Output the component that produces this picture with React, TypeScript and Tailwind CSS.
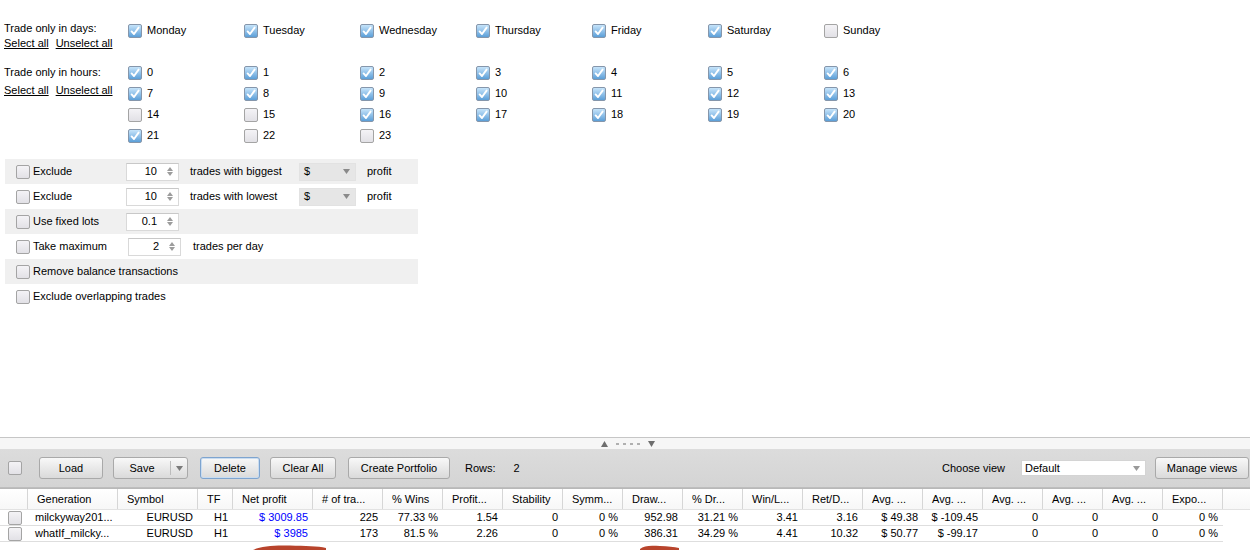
import React from "react";

function Cb({ checked }: { checked?: boolean }) {
  return checked ? (
    <span className="inline-flex h-[14px] w-[14px] shrink-0 items-center justify-center rounded-[2px] border border-[#8596ab] bg-linear-to-b from-[#c6e4fa] to-[#5b9fd8]">
      <svg viewBox="0 0 12 12" className="h-[12px] w-[12px]">
        <path d="M2.6 6.4 L5 9 L9.6 2.6" fill="none" stroke="white" strokeWidth="1.9" strokeLinecap="round" strokeLinejoin="round" />
      </svg>
    </span>
  ) : (
    <span className="inline-block h-[14px] w-[14px] shrink-0 rounded-[2px] border border-[#a4a4a4] bg-linear-to-b from-[#f4f3f6] to-[#e2e1e6]" />
  );
}

const days = [
  ["Monday", true],
  ["Tuesday", true],
  ["Wednesday", true],
  ["Thursday", true],
  ["Friday", true],
  ["Saturday", true],
  ["Sunday", false],
] as const;

const offHours = new Set([14, 15, 22, 23]);

function Spinner({ value, extra = "" }: { value: string; extra?: string }) {
  return (
    <div className={"flex h-[18px] w-[53px] shrink-0 items-center border border-[#d9d9d9] border-t-[#c8c8c8] bg-white " + extra}>
      <span className="flex-1 pr-[10px] text-right">{value}</span>
      <span className="mr-[5px] flex flex-col items-center gap-[1px]">
        <svg width="6" height="4" viewBox="0 0 6 4"><path d="M0 4 L3 0 L6 4 Z" fill="#9c9c9c" /></svg>
        <svg width="6" height="4" viewBox="0 0 6 4"><path d="M0 0 L3 4 L6 0 Z" fill="#9c9c9c" /></svg>
      </span>
    </div>
  );
}

function Dropdown() {
  return (
    <div className="flex h-[18px] w-[57px] shrink-0 items-center justify-between border border-[#e2e2e2] bg-[#e6e6e6] pl-[4px] pr-[5px]">
      <span>$</span>
      <svg width="7" height="5" viewBox="0 0 7 5"><path d="M0 0 L7 0 L3.5 5 Z" fill="#8a8a8a" /></svg>
    </div>
  );
}

function OptRow({ gray, children }: { gray?: boolean; children: React.ReactNode }) {
  return (
    <div className={"flex h-[25px] items-center pl-[11px] " + (gray ? "bg-[#f0f0f0]" : "")}>{children}</div>
  );
}

function Btn({ children, w, focus = false }: { children: React.ReactNode; w: string; focus?: boolean }) {
  return (
    <div
      className={
        "flex h-[22px] shrink-0 items-center justify-center rounded-[3px] border bg-linear-to-b from-[#f8f8f8] to-[#dadada] " +
        w +
        (focus ? " border-[#7ea4cf] shadow-[inset_0_0_0_1px_#c9dcf0]" : " border-[#a9a9a9]")
      }
    >
      {children}
    </div>
  );
}

const cols: { w: number; h: string; left?: boolean }[] = [
  { w: 28, h: "" },
  { w: 90, h: "Generation", left: true },
  { w: 80, h: "Symbol" },
  { w: 35, h: "TF" },
  { w: 80, h: "Net profit" },
  { w: 70, h: "# of tra..." },
  { w: 60, h: "% Wins" },
  { w: 60, h: "Profit..." },
  { w: 60, h: "Stability" },
  { w: 60, h: "Symm..." },
  { w: 60, h: "Draw..." },
  { w: 60, h: "% Dr..." },
  { w: 60, h: "Win/L..." },
  { w: 60, h: "Ret/D..." },
  { w: 60, h: "Avg. ..." },
  { w: 60, h: "Avg. ..." },
  { w: 60, h: "Avg. ..." },
  { w: 60, h: "Avg. ..." },
  { w: 60, h: "Avg. ..." },
  { w: 60, h: "Expo..." },
];

const rows = [
  ["milckyway201...", "EURUSD", "H1", "$ 3009.85", "225", "77.33 %", "1.54", "0", "0 %", "952.98", "31.21 %", "3.41", "3.16", "$ 49.38", "$ -109.45", "0", "0", "0", "0 %"],
  ["whatIf_milcky...", "EURUSD", "H1", "$ 3985", "173", "81.5 %", "2.26", "0", "0 %", "386.31", "34.29 %", "4.41", "10.32", "$ 50.77", "$ -99.17", "0", "0", "0", "0 %"],
];

export default function App() {
  return (
    <div className="flex h-[550px] w-[1250px] flex-col overflow-hidden bg-white font-['Liberation_Sans',Arial,sans-serif] text-[11px] text-black">
      {/* top settings */}
      <div className="h-[437px] shrink-0 pt-[20px]">
        {/* days */}
        <div className="flex h-[42px]">
          <div className="w-[128px] shrink-0 pl-[4px] pt-[1px] leading-[15px]">
            <div>Trade only in days:</div>
            <div>
              <span className="underline">Select all</span>
              <span className="ml-[7px] underline">Unselect all</span>
            </div>
          </div>
          <div className="grid grid-cols-[repeat(7,116px)]">
            {days.map(([d, c]) => (
              <div key={d} className="flex h-[21px] items-center gap-[5px]">
                <Cb checked={c} />
                <span>{d}</span>
              </div>
            ))}
          </div>
        </div>
        {/* hours */}
        <div className="flex">
          <div className="w-[128px] shrink-0 pl-[4px] pt-[2px] leading-[17.5px]">
            <div>Trade only in hours:</div>
            <div>
              <span className="underline">Select all</span>
              <span className="ml-[7px] underline">Unselect all</span>
            </div>
          </div>
          <div className="grid grid-cols-[repeat(7,116px)]">
            {Array.from({ length: 24 }, (_, i) => (
              <div key={i} className="flex h-[21px] items-center gap-[5px]">
                <Cb checked={!offHours.has(i)} />
                <span>{i}</span>
              </div>
            ))}
          </div>
        </div>
        {/* options */}
        <div className="ml-[5px] mt-[13px] w-[413px]">
          <OptRow gray>
            <Cb />
            <span className="ml-[3px] w-[93px] shrink-0">Exclude</span>
            <Spinner value="10" />
            <span className="ml-[11px] w-[109px] shrink-0">trades with biggest</span>
            <Dropdown />
            <span className="ml-[11px]">profit</span>
          </OptRow>
          <OptRow>
            <Cb />
            <span className="ml-[3px] w-[93px] shrink-0">Exclude</span>
            <Spinner value="10" />
            <span className="ml-[11px] w-[109px] shrink-0">trades with lowest</span>
            <Dropdown />
            <span className="ml-[11px]">profit</span>
          </OptRow>
          <OptRow gray>
            <Cb />
            <span className="ml-[3px] w-[93px] shrink-0">Use fixed lots</span>
            <Spinner value="0.1" />
          </OptRow>
          <OptRow>
            <Cb />
            <span className="ml-[3px] w-[95px] shrink-0">Take maximum</span>
            <Spinner value="2" />
            <span className="ml-[12px]">trades per day</span>
          </OptRow>
          <OptRow gray>
            <Cb />
            <span className="ml-[3px]">Remove balance transactions</span>
          </OptRow>
          <OptRow>
            <Cb />
            <span className="ml-[3px]">Exclude overlapping trades</span>
          </OptRow>
        </div>
      </div>

      {/* splitter */}
      <div className="flex h-[12px] shrink-0 items-center justify-center gap-[8px] border-t border-[#c6c6c6] bg-[#f6f6f6] pl-[6px]">
        <svg width="7" height="6" viewBox="0 0 7 6"><path d="M0 6 L3.5 0 L7 6 Z" fill="#6e6e6e" /></svg>
        <div className="flex gap-[4px]">
          {[0, 1, 2, 3].map((i) => (
            <span key={i} className="h-[2px] w-[3px] bg-[#b0b0b0]" />
          ))}
        </div>
        <svg width="7" height="6" viewBox="0 0 7 6"><path d="M0 0 L7 0 L3.5 6 Z" fill="#6e6e6e" /></svg>
      </div>

      {/* toolbar */}
      <div className="flex h-[39px] shrink-0 items-center border-b border-[#bdbdbd] bg-linear-to-b from-[#dcdcdc] to-[#d4d4d4] pl-[8px] pr-[1px]">
        <Cb />
        <div className="ml-[17px]">
          <Btn w="w-[64px]">Load</Btn>
        </div>
        <div className="ml-[10px]">
          <Btn w="w-[75px]">
            <span className="flex h-full w-full items-center">
              <span className="flex-1 text-center">Save</span>
              <span className="h-[14px] w-px bg-[#bcbcbc]" />
              <span className="flex w-[16px] justify-center">
                <svg width="7" height="5" viewBox="0 0 7 5"><path d="M0 0 L7 0 L3.5 5 Z" fill="#7a7a7a" /></svg>
              </span>
            </span>
          </Btn>
        </div>
        <div className="ml-[12px]">
          <Btn w="w-[60px]" focus>Delete</Btn>
        </div>
        <div className="ml-[10px]">
          <Btn w="w-[66px]">Clear All</Btn>
        </div>
        <div className="ml-[12px]">
          <Btn w="w-[102px]">Create Portfolio</Btn>
        </div>
        <span className="ml-[15px]">Rows:</span>
        <span className="ml-[18px]">2</span>
        <div className="ml-auto flex items-center">
          <span>Choose view</span>
          <div className="ml-[16px] flex h-[16px] w-[125px] items-center justify-between border border-[#d4d4d4] bg-white pl-[3px] pr-[5px]">
            <span>Default</span>
            <svg width="7" height="5" viewBox="0 0 7 5"><path d="M0 0 L7 0 L3.5 5 Z" fill="#9a9a9a" /></svg>
          </div>
          <div className="ml-[9px]">
            <Btn w="w-[94px]">Manage views</Btn>
          </div>
        </div>
      </div>

      {/* table */}
      <div className="relative flex-1">
        <div className="flex h-[22px] border-t border-[#b8b8b8] border-b border-b-[#e2e2e2] bg-linear-to-b from-white to-[#f7f7f7]">
          {cols.map((c, i) => (
            <div
              key={i}
              style={{ width: c.w }}
              className="flex shrink-0 items-center border-r border-[#d6d6d6] pl-[9px] whitespace-nowrap"
            >
              {c.h}
            </div>
          ))}
        </div>
        {rows.map((r, ri) => (
          <div key={ri} className="flex h-[16px] w-[1223px] items-center border-b border-[#dedede]">
            <div style={{ width: 28 }} className="flex shrink-0 justify-center pl-[1px]">
              <Cb />
            </div>
            {r.map((v, i) => (
              <div
                key={i}
                style={{ width: cols[i + 1].w }}
                className={
                  "shrink-0 whitespace-nowrap " +
                  (i === 0 ? "pl-[7px] text-left" : "pr-[5px] text-right") +
                  (i === 3 ? " text-[#0000ff]" : "")
                }
              >
                {v}
              </div>
            ))}
          </div>
        ))}
        <svg className="absolute left-[250px] top-[55px]" width="80" height="10" viewBox="0 0 80 10">
          <path d="M3 7 C10 3 25 2 40 2.5 C55 3 68 3 76 5 L76 10 L3 10 Z" fill="#b8442c" />
        </svg>
        <svg className="absolute left-[638px] top-[55px]" width="44" height="10" viewBox="0 0 44 10">
          <path d="M2 6 C6 2 14 2.5 22 3 C30 3.5 36 3.5 41 5 L41 10 L2 10 Z" fill="#b8442c" />
        </svg>
      </div>
    </div>
  );
}
